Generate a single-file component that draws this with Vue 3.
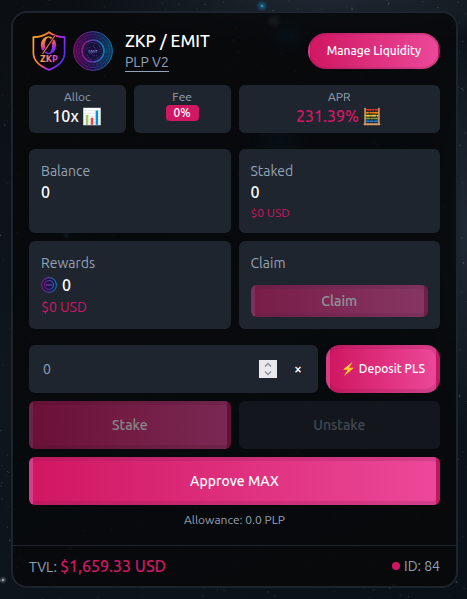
<script setup>
import { ref } from 'vue'

const amount = ref('')

function step(delta) {
  amount.value = String(Math.max(0, Number(amount.value || 0) + delta))
}

// Repeatable pseudo-random star field
let seed = 41
function rand() {
  seed = (seed * 16807) % 2147483647
  return seed / 2147483647
}
const stars = Array.from({ length: 1500 }, () => ({
  x: rand() * 467,
  y: rand() * 599,
  r: 0.3 + rand() * 0.6,
  o: 0.05 + rand() * 0.25
}))
const ringDots = Array.from({ length: 28 }, (_, i) => {
  const a = i * 2.4
  const d = 3 + (i % 9)
  return { x: 20 + Math.cos(a) * d, y: 20 + Math.sin(a) * d }
})
</script>

<template>
  <main class="page">
    <svg class="sky" viewBox="0 0 467 599" preserveAspectRatio="xMidYMid slice" aria-hidden="true">
      <defs>
        <radialGradient id="glow">
          <stop offset="0" stop-color="#54b8e0" />
          <stop offset="0.3" stop-color="#17608a" stop-opacity="0.7" />
          <stop offset="1" stop-color="#17608a" stop-opacity="0" />
        </radialGradient>
        <radialGradient id="haze">
          <stop offset="0" stop-color="#9aa4a8" stop-opacity="0.6" />
          <stop offset="1" stop-color="#9aa4a8" stop-opacity="0" />
        </radialGradient>
        <radialGradient id="cloud">
          <stop offset="0" stop-color="#0c4a72" stop-opacity="0.5" />
          <stop offset="1" stop-color="#0c4a72" stop-opacity="0" />
        </radialGradient>
        <radialGradient id="mist">
          <stop offset="0" stop-color="#2a3644" stop-opacity="0.6" />
          <stop offset="1" stop-color="#2a3644" stop-opacity="0" />
        </radialGradient>
      </defs>
      <ellipse cx="330" cy="0" rx="260" ry="45" fill="url(#mist)" />
      <ellipse cx="467" cy="230" rx="40" ry="200" fill="url(#mist)" />
      <ellipse cx="280" cy="142" rx="34" ry="20" fill="url(#cloud)" />
      <ellipse cx="288" cy="36" rx="24" ry="20" fill="url(#cloud)" />
      <circle v-for="(s, i) in stars" :key="i" :cx="s.x" :cy="s.y" :r="s.r" fill="#b9c8d4" :opacity="s.o" />
      <circle cx="262" cy="6" r="6" fill="url(#glow)" />
      <circle cx="274" cy="21" r="8" fill="url(#haze)" />
      <circle cx="66" cy="235" r="4" fill="url(#glow)" />
      <circle cx="3" cy="580" r="4" fill="url(#haze)" />
      <circle cx="3" cy="580" r="1" fill="#a9b6bd" />
    </svg>

    <section class="card">
      <div class="body">
        <header class="head">
          <div class="logos">
            <svg class="shield" viewBox="0 0 34 40" role="img" aria-label="ZKP">
              <defs>
                <linearGradient id="zkp" x1="0" y1="0.1" x2="1" y2="0.6">
                  <stop offset="0" stop-color="#ffb21c" />
                  <stop offset="0.45" stop-color="#ff6a3d" />
                  <stop offset="0.7" stop-color="#b92af0" />
                  <stop offset="1" stop-color="#4d32f0" />
                </linearGradient>
                <linearGradient id="zero" x1="0.3" y1="0" x2="0.6" y2="1">
                  <stop offset="0" stop-color="#ffb02a" />
                  <stop offset="0.45" stop-color="#e8506a" />
                  <stop offset="0.75" stop-color="#9a2af0" />
                  <stop offset="1" stop-color="#5a35f0" />
                </linearGradient>
                <linearGradient id="zkpText">
                  <stop offset="0" stop-color="#ffae2b" />
                  <stop offset="0.6" stop-color="#ee62a0" />
                  <stop offset="1" stop-color="#a83cf5" />
                </linearGradient>
              </defs>
              <path d="M17 1.2C12.5 4.6 7 6 1.4 6.2V22C1.4 30.5 9 35.7 17 39C25 35.7 32.600 30.500 32.600 22V6.200C27 6 21.500 4.600 17 1.200Z" fill="#0b0410" stroke="url(#zkp)" stroke-width="1.7" />
              <ellipse cx="16.500" cy="14.200" rx="7.600" ry="9" fill="url(#zero)" />
              <ellipse cx="16.500" cy="14.200" rx="3.600" ry="7.800" fill="#0b0410" />
              <path d="M10.500 23L23 4.500" stroke="#0b0410" stroke-width="2.400" />
              <path d="M10.500 23L23 4.500" stroke="#ff7b55" stroke-width="1.100" />
              <text x="17" y="30.500" text-anchor="middle" class="shield-text" fill="url(#zkpText)">ZKP</text>
            </svg>
            <svg class="coin" viewBox="0 0 40 40" role="img" aria-label="EMIT">
              <defs>
                <linearGradient id="emit">
                  <stop offset="0" stop-color="#8d157e" />
                  <stop offset="0.5" stop-color="#593ca5" />
                  <stop offset="1" stop-color="#087eaf" />
                </linearGradient>
                <linearGradient id="emitFill">
                  <stop offset="0" stop-color="#4b0a4c" />
                  <stop offset="0.5" stop-color="#1b1244" />
                  <stop offset="1" stop-color="#063a5c" />
                </linearGradient>
              </defs>
              <circle cx="20" cy="20" r="19.300" fill="url(#emitFill)" stroke="url(#emit)" stroke-width="1" />
              <circle cx="20" cy="20" r="16.500" fill="none" stroke="url(#emit)" stroke-width="1" opacity="0.500" />
              <circle cx="20" cy="20" r="14" fill="none" stroke="url(#emit)" stroke-width="1.500" stroke-dasharray="3 1" opacity="0.350" />
              <circle cx="20" cy="20" r="11" fill="#16103a" stroke="url(#emit)" stroke-width="1.700" />
              <circle cx="20" cy="20" r="8.500" fill="none" stroke="url(#emit)" stroke-width="0.600" opacity="0.500" />
              <circle v-for="(d, i) in ringDots" :key="i" :cx="d.x" :cy="d.y" r="0.500" fill="#765bd0" opacity="0.700" />
              <text x="20" y="21.500" text-anchor="middle" class="coin-text">EMIT</text>
            </svg>
          </div>
          <div class="title">
            <h1>ZKP / EMIT</h1>
            <a href="#">PLP V2</a>
          </div>
          <button type="button" class="btn pill">Manage Liquidity</button>
        </header>

        <div class="stats">
          <div class="tile stat">
            <span class="small muted">Alloc</span>
            <span class="value">10x 📊</span>
          </div>
          <div class="tile stat">
            <span class="small muted">Fee</span>
            <span class="badge">0%</span>
          </div>
          <div class="tile stat wide">
            <span class="small muted">APR</span>
            <span class="value pink">231.39% 🧮</span>
          </div>
        </div>

        <div class="panels">
          <div class="tile panel">
            <span class="muted">Balance</span>
            <span class="value">0</span>
          </div>
          <div class="tile panel">
            <span class="muted">Staked</span>
            <span class="value">0</span>
            <span class="usd pink">$0 USD</span>
          </div>
          <div class="tile panel">
            <span class="muted">Rewards</span>
            <span class="value reward">
              <svg class="glyph" viewBox="0 0 16 16" aria-hidden="true">
                <circle cx="8" cy="8" r="7.400" fill="#151943" stroke="url(#emit)" stroke-width="1.100" />
                <circle cx="8" cy="8" r="4.500" fill="#26104f" stroke="url(#emit)" stroke-width="1.100" />
                <path d="M5 8H11" stroke="#7152b8" stroke-width="1" />
              </svg>
              0
            </span>
            <span class="pink">$0 USD</span>
          </div>
          <div class="tile panel">
            <span class="muted">Claim</span>
            <button type="button" class="btn claim" disabled>Claim</button>
          </div>
        </div>

        <div class="amount-row">
          <div class="tile field">
            <input v-model="amount" type="number" placeholder="0" aria-label="Amount" />
            <div class="stepper">
              <button type="button" aria-label="Increase" @click="step(1)">
                <svg viewBox="0 0 18 9" aria-hidden="true"><path d="M6 6.500L9 3.500L12 6.500" /></svg>
              </button>
              <button type="button" aria-label="Decrease" @click="step(-1)">
                <svg viewBox="0 0 18 9" aria-hidden="true"><path d="M6 2.500L9 5.500L12 2.500" /></svg>
              </button>
            </div>
            <button type="button" class="clear" aria-label="Clear" @click="amount = ''">×</button>
          </div>
          <button type="button" class="btn deposit">⚡ Deposit PLS</button>
        </div>

        <div class="actions">
          <button type="button" class="btn block" disabled>Stake</button>
          <button type="button" class="btn block plain" disabled>Unstake</button>
          <button type="button" class="btn block full">Approve MAX</button>
        </div>
        <p class="small muted allowance">Allowance: 0.0 PLP</p>
      </div>

      <footer class="foot">
        <span class="muted">TVL: <strong>$1,659.33 USD</strong></span>
        <span class="muted id"><i class="dot"></i>ID: 84</span>
      </footer>
    </section>
  </main>
</template>

<style>
body {
  margin: 0;
  background: #0b1015;
}
</style>

<style scoped>
* {
  box-sizing: border-box;
}

.page {
  position: relative;
  min-height: 100vh;
  padding: 11px 9px 11px 11px;
  overflow: hidden;
  background: linear-gradient(160deg, #0b0f13, #0f161e 50%, #0a1116);
  color: #fff;
  font-family: Ubuntu, Roboto, "Noto Sans", "Noto Color Emoji", sans-serif;
  font-size: 14px;
  line-height: 20px;
}

.sky {
  position: absolute;
  inset: 0;
  width: 100%;
  height: 100%;
}

.card {
  position: relative;
  border: 2px solid #1d242e;
  border-radius: 16px;
  background: rgba(6, 7, 9, 0.8);
}

.body {
  padding: 16px 16px 14px;
}

.head {
  display: flex;
  align-items: center;
  height: 44px;
  margin-bottom: 12px;
}

.logos {
  display: flex;
  align-items: center;
  gap: 7px;
  padding-left: 3px;
}

.shield {
  width: 34px;
  height: 40px;
}

.shield-text {
  font: 700 8px "DejaVu Sans", sans-serif;
}

.coin {
  width: 40px;
  height: 40px;
}

.coin-text {
  font: 400 4px "DejaVu Sans", sans-serif;
  fill: #9296d0;
}

.title {
  flex: 1;
  padding-left: 12px;
}

h1 {
  margin: 0;
  font-size: 17px;
  font-weight: 500;
  line-height: 22px;
}

a {
  display: inline-block;
  color: #94a3b8;
  line-height: 18px;
  text-decoration: none;
  border-bottom: 1px solid;
}

.tile {
  border-radius: 6px;
  background: #1f252e;
}

.muted {
  color: #94a3b8;
}

.small {
  font-size: 12px;
  line-height: 16px;
}

.usd {
  font-size: 12px;
}

.pink {
  color: #d01762;
}

.value {
  font-size: 16px;
  font-weight: 500;
  line-height: 22px;
  white-space: nowrap;
}

.reward {
  display: flex;
  align-items: center;
  gap: 5px;
  line-height: 24px;
}

.glyph {
  width: 16px;
  height: 16px;
}

.stats {
  display: grid;
  grid-template-columns: repeat(4, 1fr);
  gap: 8px;
  margin-bottom: 16px;
}

.stat {
  display: flex;
  flex-direction: column;
  align-items: center;
  height: 48px;
  padding: 4px;
}

.wide {
  grid-column: span 2;
}

.badge {
  padding: 0 8px;
  border-radius: 4px;
  background: #d01762;
  font-size: 12px;
  font-weight: 500;
  line-height: 16px;
}

.panels {
  display: grid;
  grid-template-columns: 1fr 1fr;
  grid-template-rows: 84px 88px;
  gap: 8px;
  margin-bottom: 16px;
}

.panel {
  display: flex;
  flex-direction: column;
  padding: 12px;
}

.btn {
  border: 4px solid rgba(130, 32, 80, 0.22);
  border-radius: 6px;
  background: linear-gradient(90deg, #d01762, #ec4899);
  color: #fff;
  font: 500 14px/20px Ubuntu, Roboto, "Noto Sans", "Noto Color Emoji", sans-serif;
}

.btn:disabled {
  opacity: 0.5;
}

.pill {
  height: 36px;
  padding: 0 17px;
  border-width: 2px;
  border-radius: 18px;
  font-size: 12px;
}

.claim {
  height: 32px;
  margin-top: auto;
}

.amount-row {
  display: flex;
  gap: 8px;
  margin-bottom: 8px;
}

.field {
  display: flex;
  flex: 1;
  align-items: center;
  min-width: 0;
  height: 48px;
  padding: 0 12px 0 14px;
}

input {
  flex: 1;
  min-width: 0;
  height: 100%;
  padding: 0;
  border: 0;
  outline: 0;
  appearance: textfield;
  background: none;
  color: #fff;
  font: inherit;
}

input::-webkit-inner-spin-button {
  appearance: none;
}

input::placeholder {
  color: #94a3b8;
  opacity: 1;
}

.stepper {
  display: grid;
  width: 18px;
  height: 18px;
  background: #e9e9ed;
}

.stepper button {
  height: 9px;
  padding: 0;
  border: 0;
  background: none;
}

.stepper svg {
  display: block;
  width: 18px;
  height: 9px;
  fill: none;
  stroke: #8d8d96;
  stroke-width: 1.400;
}

.clear {
  width: 16px;
  margin-left: 13px;
  padding: 0;
  border: 0;
  background: none;
  color: #fff;
  font: 500 14px/20px Ubuntu, Roboto, sans-serif;
}

.deposit {
  width: 114px;
  padding: 0;
  border-radius: 14px;
  font-size: 12px;
  white-space: nowrap;
}

.actions {
  display: grid;
  grid-template-columns: 1fr 1fr;
  gap: 8px;
}

.block {
  height: 48px;
}

.plain {
  border-color: transparent;
  background: #1f252e;
  color: #7d8794;
}

.full {
  grid-column: span 2;
}

.allowance {
  margin: 7px 0 0;
  padding-bottom: 3px;
  text-align: center;
}

.foot {
  display: flex;
  align-items: center;
  justify-content: space-between;
  height: 41px;
  padding: 0 16px;
  border-top: 1px solid #1f252e;
}

strong {
  color: #d01762;
  font-size: 16px;
  font-weight: 500;
}

.id {
  display: flex;
  align-items: center;
  gap: 4px;
}

.dot {
  width: 8px;
  height: 8px;
  border-radius: 50%;
  background: #d01762;
}
</style>
